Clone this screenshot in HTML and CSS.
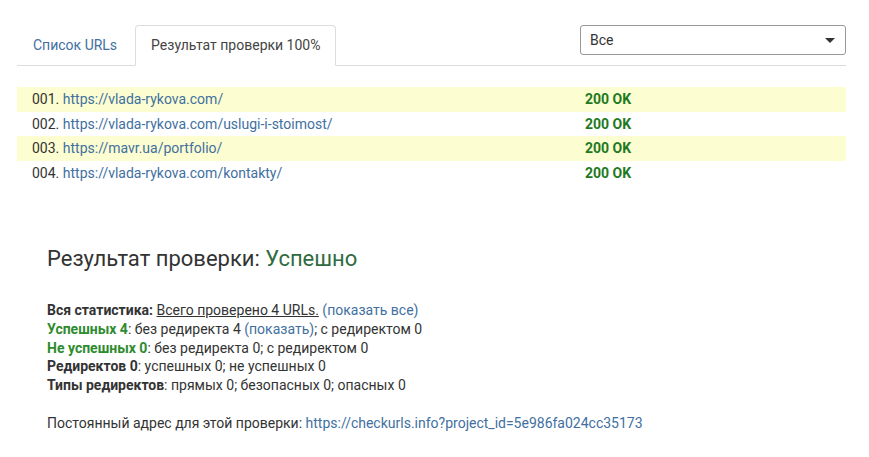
FILE: index.html
```html
<!DOCTYPE html>
<html lang="ru">
  <head>
    <meta charset="UTF-8" />
    <title>Проверка URLs</title>
    <link rel="stylesheet" href="styles.css">
  </head>
  <body>
    <div class="container">
      <div class="top-bar">
        <ul class="tabs">
          <li class="tab"><a href="#">Список URLs</a></li>
          <li class="tab active">Результат проверки 100%</li>
        </ul>
        <div class="filter">
          <span>Все</span>
          <span class="caret"></span>
        </div>
      </div>

      <div class="results">
        <div class="row odd">
          <div class="url">001. <a href="#">https://vlada-rykova.com/</a></div>
          <div class="status">200 OK</div>
        </div>
        <div class="row">
          <div class="url">002. <a href="#">https://vlada-rykova.com/uslugi-i-stoimost/</a></div>
          <div class="status">200 OK</div>
        </div>
        <div class="row odd">
          <div class="url">003. <a href="#">https://mavr.ua/portfolio/</a></div>
          <div class="status">200 OK</div>
        </div>
        <div class="row">
          <div class="url">004. <a href="#">https://vlada-rykova.com/kontakty/</a></div>
          <div class="status">200 OK</div>
        </div>
      </div>

      <div class="summary">
        <h2>Результат проверки: <span class="ok">Успешно</span></h2>
        <div class="stats">
          <p><b>Вся статистика:</b> <u>Всего проверено 4 URLs.</u> <a href="#">(показать все)</a></p>
          <p><b class="green">Успешных 4</b>: без редиректа 4 <a href="#">(показать)</a>; с редиректом 0</p>
          <p><b class="green">Не успешных 0</b>: без редиректа 0; с редиректом 0</p>
          <p><b>Редиректов 0</b>: успешных 0; не успешных 0</p>
          <p><b>Типы редиректов</b>: прямых 0; безопасных 0; опасных 0</p>
        </div>
        <p class="permalink">Постоянный адрес для этой проверки: <a href="#">https://checkurls.info?project_id=5e986fa024cc35173</a></p>
      </div>
    </div>
  </body>
</html>
```

FILE: styles.css
```css
* {
    margin: 0;
    padding: 0;
    box-sizing: border-box;
}

body {
    font-family: Roboto, "Liberation Sans", sans-serif;
    font-size: 14px;
    color: #333;
    background: #fff;
}

a {
    color: #41709f;
    text-decoration: none;
}

.container {
    width: 829px;
    margin-left: 17px;
    padding-top: 25px;
}

.top-bar {
    display: flex;
    justify-content: space-between;
    align-items: flex-start;
    border-bottom: 1px solid #ddd;
}

.tabs {
    display: flex;
    list-style: none;
}

.tab {
    padding: 10px 15px 10px 15px;
    line-height: 19px;
    border: 1px solid transparent;
    border-radius: 4px 4px 0 0;
    margin-bottom: -1px;
}

.tab.active {
    margin-left: 2px;
    border-color: #ddd;
    border-bottom-color: #fff;
    background: #fff;
    color: #444;
}

.filter {
    width: 266px;
    height: 30px;
    border: 1px solid #999;
    border-radius: 3px;
    display: flex;
    justify-content: space-between;
    align-items: center;
    padding: 0 10px 0 9px;
    color: #333;
}

.caret {
    width: 0;
    height: 0;
    border-left: 5px solid transparent;
    border-right: 5px solid transparent;
    border-top: 5px solid #333;
}

.results {
    margin-top: 21px;
}

.row {
    display: grid;
    grid-template-columns: 553px 1fr;
    padding-left: 15px;
    height: 24.5px;
    line-height: 24.5px;
}

.row.odd {
    background: #fcfdd1;
}

.status {
    font-weight: bold;
    color: #1f7a1f;
}

.summary {
    padding-left: 30px;
    margin-top: 59px;
}

.summary h2 {
    font-size: 22px;
    font-weight: normal;
    color: #333;
    line-height: 30px;
}

.summary h2 .ok {
    color: #2f6b40;
}

.stats {
    margin-top: 27px;
    line-height: 18.8px;
}

.stats b {
    font-weight: bold;
}

.green {
    color: #2e8b2e;
}

.permalink {
    margin-top: 19px;
    line-height: 19px;
}
```
